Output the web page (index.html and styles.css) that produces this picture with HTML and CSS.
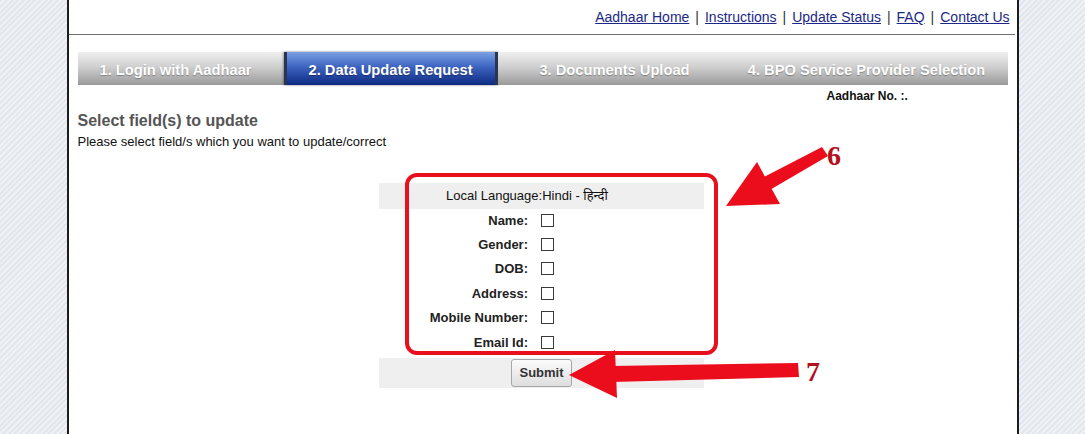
FILE: index.html
```html
<!DOCTYPE html>
<html lang="en">
<head>
  <meta charset="UTF-8" />
  <title>Aadhaar Self Service Update Portal</title>
  <link rel="stylesheet" href="styles.css">
</head>
<body>

<div class="page">
  <div class="top-links">
    <a href="#">Aadhaar Home</a><span class="sep">|</span><a href="#">Instructions</a><span class="sep">|</span><a href="#">Update Status</a><span class="sep">|</span><a href="#">FAQ</a><span class="sep">|</span><a href="#">Contact Us</a>
  </div>

  <div class="main">
    <ul class="steps">
      <li class="step step-1">1. Login with Aadhaar</li>
      <li class="step step-2 active">2. Data Update Request</li>
      <li class="step step-3">3. Documents Upload</li>
      <li class="step step-4">4. BPO Service Provider Selection</li>
    </ul>

    <div class="aadhaar-no">Aadhaar No. :.</div>

    <h3 class="section-title">Select field(s) to update</h3>
    <p class="section-note">Please select field/s which you want to update/correct</p>

    <form class="update-form" onsubmit="return false">
      <div class="lang-row">Local Language:Hindi - हिन्दी</div>
      <label class="field-row first"><span class="field-label">Name:</span><input type="checkbox"></label>
      <label class="field-row"><span class="field-label">Gender:</span><input type="checkbox"></label>
      <label class="field-row"><span class="field-label">DOB:</span><input type="checkbox"></label>
      <label class="field-row"><span class="field-label">Address:</span><input type="checkbox"></label>
      <label class="field-row"><span class="field-label">Mobile Number:</span><input type="checkbox"></label>
      <label class="field-row"><span class="field-label">Email Id:</span><input type="checkbox"></label>
      <div class="submit-row"><button type="submit">Submit</button></div>
    </form>
  </div>
</div>

<!-- screenshot annotations -->
<div class="mark-box"></div>
<svg class="mark-arrows" width="1085" height="434" viewBox="0 0 1085 434">
  <polygon points="822,147 828,156 768,191 762,178" />
  <polygon points="726,206 757,162 780,204" />
  <polygon points="798,363 799,377 612,382 612,366" />
  <polygon points="569,375 615,350 617,398" />
</svg>
<span class="mark-num num-6">6</span>
<span class="mark-num num-7">7</span>

</body>
</html>
```

FILE: styles.css
```css
* {
  box-sizing: border-box;
}

body {
  margin: 0;
  min-height: 100vh;
  position: relative;
  font-family: 'Liberation Sans', Arial, 'Noto Sans', sans-serif;
  color: #111;
  background-color: #e6e9ef;
  background-image: repeating-linear-gradient(135deg, #e2e6ed 0, #e2e6ed 2px, #eff1f5 2px, #eff1f5 4px);
}

.page {
  width: 952px;
  min-height: 100vh;
  margin: 0 auto;
  background: #fff;
  border-left: 2px solid #1c1c1c;
  border-right: 2px solid #1c1c1c;
}

.top-links {
  height: 35px;
  margin-right: 2px;
  padding: 9px 5px 0 0;
  text-align: right;
  font-size: 14px;
  line-height: 16px;
  color: #333;
  border-bottom: 1px solid #6e6e6e;
}

.top-links a {
  color: #1b2887;
}

.top-links .sep {
  margin: 0 6px;
}

.main {
  padding: 0 11px 0 9px;
}

/* step tabs */
.steps {
  display: flex;
  list-style: none;
  margin: 17px 0 0;
  padding: 0;
  height: 33px;
}

.step {
  flex: none;
  height: 33px;
  line-height: 36px;
  text-align: center;
  font-size: 14.7px;
  font-weight: bold;
  color: #fff;
  text-shadow: 0 1px 1px rgba(0, 0, 0, 0.3);
  background: linear-gradient(#efefef, #cfcfcf 45%, #9a9a9a);
}

.step-1 { width: 206px; padding-right: 10px; }
.step-2 { width: 214px; }
.step-3 { width: 234px; }
.step-4 { width: 276px; padding-right: 6px; }

.step.active {
  background: linear-gradient(#7aa1e4, #3d64c0 45%, #0d2a82);
  border-left: 3px solid #2b3550;
  border-right: 3px solid #2b3550;
  box-shadow: -1px 0 2px rgba(0,0,0,0.3), 1px 0 2px rgba(0,0,0,0.3);
  text-shadow: 0 1px 1px rgba(0, 0, 0, 0.35);
}

.aadhaar-no {
  margin: 4px 0 0 749px;
  font-size: 12px;
  line-height: 14px;
  font-weight: bold;
  color: #111;
}

.section-title {
  margin: 9px 0 0;
  font-size: 16px;
  line-height: 18px;
  color: #555;
}

.section-note {
  margin: 4px 0 0;
  font-size: 13px;
  line-height: 16px;
}

/* field selection */
.update-form {
  width: 325px;
  margin: 33px auto 0;
  font-size: 13px;
}

.lang-row {
  height: 26px;
  line-height: 26px;
  padding-left: 67px;
  background: #efefef;
}

.field-row {
  display: flex;
  align-items: center;
  height: 24.5px;
}

.field-row.first {
  height: 23px;
}

.field-label {
  width: 149px;
  text-align: right;
  font-weight: bold;
  color: #222;
}

.field-row input {
  -webkit-appearance: none;
  appearance: none;
  width: 13px;
  height: 13px;
  margin: 0 0 0 13px;
  border: 1px solid #3a3a3a;
  background: #fff;
}

.submit-row {
  display: flex;
  justify-content: center;
  align-items: center;
  height: 30px;
  margin-top: 3px;
  background: #efefef;
}

.submit-row button {
  width: 61px;
  height: 28px;
  font-family: inherit;
  font-size: 13px;
  font-weight: bold;
  color: #333;
  border: 1px solid #a6a6a6;
  border-radius: 3px;
  background: linear-gradient(#fbfbfb, #dedede);
}

/* red annotations */
.mark-box {
  position: absolute;
  left: 405px;
  top: 173px;
  width: 313px;
  height: 182px;
  border: 4px solid #e8101d;
  border-radius: 12px;
}

.mark-arrows {
  position: absolute;
  left: 0;
  top: 0;
  fill: #ec0d1c;
}

.mark-num {
  position: absolute;
  font-family: 'Liberation Serif', 'Times New Roman', serif;
  font-weight: bold;
  font-size: 28px;
  line-height: 28px;
  color: #b3121c;
}

.num-6 { left: 827px; top: 142px; }
.num-7 { left: 806px; top: 358px; }
```
